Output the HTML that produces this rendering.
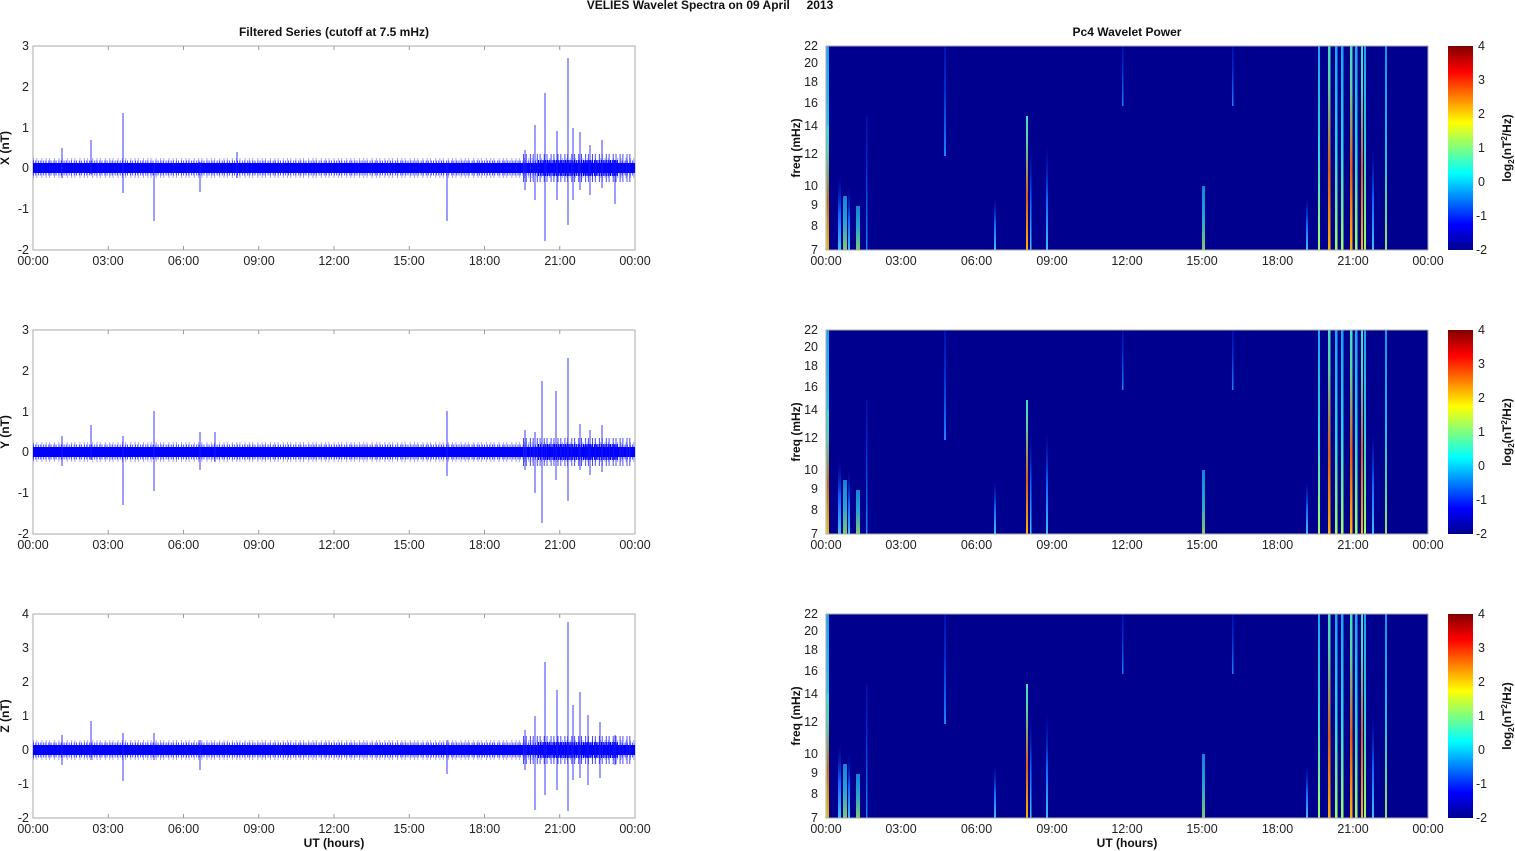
<!DOCTYPE html>
<html><head><meta charset="utf-8"><style>
html,body{margin:0;padding:0;background:#fff;}
svg{display:block;font-family:"Liberation Sans",sans-serif;}
.t{font-size:12.5px;fill:#222;}
.b{font-size:12px;font-weight:bold;fill:#111;}
</style></head><body>
<svg width="1515" height="851" viewBox="0 0 1515 851" xmlns="http://www.w3.org/2000/svg">
<defs>
<linearGradient id="jet" x1="0" y1="1" x2="0" y2="0">
<stop offset="0" stop-color="#00008f"/><stop offset="0.125" stop-color="#0000ff"/>
<stop offset="0.375" stop-color="#00ffff"/><stop offset="0.625" stop-color="#ffff00"/>
<stop offset="0.875" stop-color="#ff0000"/><stop offset="1" stop-color="#800000"/>
</linearGradient>
<linearGradient id="hot" x1="0" y1="1" x2="0" y2="0">
<stop offset="0" stop-color="#ffb000"/><stop offset="0.4" stop-color="#e06010"/><stop offset="0.8" stop-color="#60d0a0"/><stop offset="1" stop-color="#40e0c0"/>
</linearGradient>
<linearGradient id="cy" x1="0" y1="1" x2="0" y2="0">
<stop offset="0" stop-color="#a0ff60"/><stop offset="0.5" stop-color="#30d0e0"/><stop offset="1" stop-color="#20a0f0"/>
</linearGradient>
<linearGradient id="lb" x1="0" y1="1" x2="0" y2="0">
<stop offset="0" stop-color="#40c0ff"/><stop offset="0.5" stop-color="#1060ff"/><stop offset="1" stop-color="#0020c0" stop-opacity="0"/>
</linearGradient>
<linearGradient id="faint" x1="0" y1="1" x2="0" y2="0">
<stop offset="0" stop-color="#2080ff"/><stop offset="0.6" stop-color="#0030d0"/><stop offset="1" stop-color="#0010b0"/>
</linearGradient>
<g id="spec">
<rect x="0" y="0" width="602" height="204" fill="#00008f"/>
<g>
<rect x="0" y="0" width="3" height="204" fill="url(#cy)"/>
<rect x="1" y="80" width="2" height="124" fill="url(#hot)"/>
<rect x="12" y="130" width="3" height="74" fill="url(#lb)"/>
<rect x="17" y="150" width="4" height="54" fill="url(#cy)" opacity="0.8"/>
<rect x="22" y="140" width="2" height="64" fill="url(#lb)"/>
<rect x="30" y="160" width="4" height="44" fill="url(#cy)" opacity="0.8"/>
<rect x="40" y="70" width="1.5" height="134" fill="url(#faint)"/>
<rect x="118" y="0" width="2" height="110" fill="url(#faint)"/>
<rect x="168" y="150" width="2" height="54" fill="url(#lb)"/>
<rect x="200" y="70" width="2" height="134" fill="url(#hot)"/>
<rect x="204" y="100" width="1.5" height="104" fill="url(#lb)"/>
<rect x="220" y="100" width="2" height="104" fill="url(#lb)"/>
<rect x="296" y="0" width="1.5" height="60" fill="url(#faint)"/>
<rect x="376" y="140" width="3" height="64" fill="url(#cy)" opacity="0.8"/>
<rect x="406" y="0" width="1.5" height="60" fill="url(#faint)"/>
<rect x="480" y="150" width="2" height="54" fill="url(#lb)"/>
<rect x="492" y="0" width="2" height="204" fill="url(#cy)"/>
<rect x="502" y="0" width="2.5" height="204" fill="url(#hot)"/>
<rect x="509" y="0" width="2.5" height="204" fill="url(#cy)"/>
<rect x="515" y="0" width="2.5" height="204" fill="url(#cy)"/>
<rect x="524" y="0" width="2.5" height="204" fill="url(#hot)"/>
<rect x="529" y="0" width="2.5" height="204" fill="url(#cy)"/>
<rect x="535" y="0" width="2" height="204" fill="url(#hot)"/>
<rect x="538" y="0" width="2" height="204" fill="url(#cy)"/>
<rect x="546" y="100" width="2" height="104" fill="url(#lb)"/>
<rect x="559" y="0" width="2" height="204" fill="url(#cy)" opacity="0.9"/>
</g>
</g>
<g id="faxis" class="t" text-anchor="end">
<text x="-4" y="4">7</text><text x="-4" y="-20">8</text><text x="-4" y="-41">9</text><text x="-4" y="-60">10</text><text x="-4" y="-92">12</text><text x="-4" y="-120">14</text><text x="-4" y="-143">16</text><text x="-4" y="-164">18</text><text x="-4" y="-183">20</text><text x="-4" y="-200">22</text>
</g>
<g id="cbar">
<rect x="0" y="0" width="25" height="204" fill="url(#jet)"/>
<g class="t"><text x="30" y="4">4</text><text x="30" y="38">3</text><text x="30" y="72">2</text><text x="30" y="106">1</text><text x="30" y="140">0</text><text x="28" y="174">-1</text><text x="28" y="208">-2</text></g>
</g>
<g id="ltime" class="t" text-anchor="middle">
<text x="33" y="265">00:00</text><text x="108" y="265">03:00</text><text x="183.5" y="265">06:00</text><text x="259" y="265">09:00</text><text x="334" y="265">12:00</text><text x="409" y="265">15:00</text><text x="484.5" y="265">18:00</text><text x="560" y="265">21:00</text><text x="635" y="265">00:00</text>
</g>
<g id="ticks" stroke="#999" stroke-width="1">
<path d="M75.25 0v4M150.5 0v4M225.75 0v4M301 0v4M376.25 0v4M451.5 0v4M526.75 0v4M75.25 204v-4M150.5 204v-4M225.75 204v-4M301 204v-4M376.25 204v-4M451.5 204v-4M526.75 204v-4"/>
</g>
<g id="band">
<path d="M0 0H602" stroke="#7070ff" stroke-width="20" stroke-dasharray="1 2.3 1 4.1 1 3.3" opacity="0.6"/>
<path d="M0 0H602" stroke="#3030ff" stroke-width="15" stroke-dasharray="1 1.2 1 1.9" opacity="0.85"/>
<path d="M0 0H602" stroke="#0000ff" stroke-width="10"/>
<path d="M490 0H600" stroke="#2020ff" stroke-width="28" stroke-dasharray="1 1.8 1 3.1" opacity="0.8"/>
<path d="M505 0H585" stroke="#0000ff" stroke-width="16" stroke-dasharray="1 0.8"/>
</g>
</defs>

<text x="710" y="9" class="b" text-anchor="middle">VELIES Wavelet Spectra on 09 April &#160;&#160;&#160;&#160;2013</text>
<text x="334" y="36" class="b" text-anchor="middle">Filtered Series (cutoff at 7.5 mHz)</text>
<text x="1127" y="36" class="b" text-anchor="middle">Pc4 Wavelet Power</text>

<g>
<rect x="33" y="46" width="602" height="204" fill="#fff" stroke="#aaa"/>
<use href="#ticks" x="33" y="46"/>
<use href="#band" x="33" y="168"/>
<g stroke="#1a1aff" stroke-width="1" opacity="0.85">
<path d="M62 148V178M91 140V174M123 113V193M154 164V221M200 162V192M237 152V178M447 164V221M535 125V200M545 93V241M557 131V200M568 58V225M573 128V200M580 132V190M602 140V188M615 160V204M525 150V190M590 145V195"/>
</g>
<g class="t" text-anchor="end"><text x="29" y="50">3</text><text x="29" y="91">2</text><text x="29" y="132">1</text><text x="29" y="172">0</text><text x="29" y="213">-1</text><text x="29" y="254">-2</text></g>
<text transform="translate(9,148) rotate(-90)" class="b" text-anchor="middle">X (nT)</text>
<use href="#ltime"/>
</g>

<g>
<rect x="33" y="330" width="602" height="204" fill="#fff" stroke="#aaa"/>
<use href="#ticks" x="33" y="330"/>
<use href="#band" x="33" y="452"/>
<g stroke="#1a1aff" stroke-width="1" opacity="0.85">
<path d="M62 436V466M91 425V460M123 436V505M154 411V491M200 432V470M215 432V462M447 411V476M535 432V493M542 381V523M556 391V480M568 358V501M580 424V470M602 425V472M525 430V470M590 430V475"/>
</g>
<g class="t" text-anchor="end"><text x="29" y="334">3</text><text x="29" y="375">2</text><text x="29" y="416">1</text><text x="29" y="456">0</text><text x="29" y="497">-1</text><text x="29" y="538">-2</text></g>
<text transform="translate(9,432) rotate(-90)" class="b" text-anchor="middle">Y (nT)</text>
<use href="#ltime" y="284"/>
</g>

<g>
<rect x="33" y="614" width="602" height="204" fill="#fff" stroke="#aaa"/>
<use href="#ticks" x="33" y="614"/>
<use href="#band" x="33" y="750"/>
<g stroke="#1a1aff" stroke-width="1" opacity="0.85">
<path d="M62 735V765M91 721V760M123 733V781M154 733V760M200 740V770M447 740V774M535 716V810M545 662V795M557 690V790M568 622V811M573 705V780M580 692V778M600 722V778M615 735V765M525 730V770M588 715V785"/>
</g>
<g class="t" text-anchor="end"><text x="29" y="618">4</text><text x="29" y="652">3</text><text x="29" y="686">2</text><text x="29" y="720">1</text><text x="29" y="754">0</text><text x="29" y="788">-1</text><text x="29" y="822">-2</text></g>
<text transform="translate(9,716) rotate(-90)" class="b" text-anchor="middle">Z (nT)</text>
<use href="#ltime" y="568"/>
<text x="334" y="847" class="b" text-anchor="middle">UT (hours)</text>
</g>

<g>
<use href="#spec" x="826" y="46"/>
<rect x="826" y="46" width="602" height="204" fill="none" stroke="#aaa"/>
<use href="#faxis" x="822" y="250"/>
<text transform="translate(800,148) rotate(-90)" class="b" text-anchor="middle">freq (mHz)</text>
<use href="#ltime" x="793"/>
<use href="#cbar" x="1448" y="46"/>
<text transform="translate(1511,148) rotate(-90)" class="b" text-anchor="middle">log<tspan font-size="8" dy="3">2</tspan><tspan dy="-3">(nT</tspan><tspan font-size="8" dy="-4">2</tspan><tspan dy="4">/Hz)</tspan></text>
</g>
<g>
<use href="#spec" x="826" y="330"/>
<rect x="826" y="330" width="602" height="204" fill="none" stroke="#aaa"/>
<use href="#faxis" x="822" y="534"/>
<text transform="translate(800,432) rotate(-90)" class="b" text-anchor="middle">freq (mHz)</text>
<use href="#ltime" x="793" y="284"/>
<use href="#cbar" x="1448" y="330"/>
<text transform="translate(1511,432) rotate(-90)" class="b" text-anchor="middle">log<tspan font-size="8" dy="3">2</tspan><tspan dy="-3">(nT</tspan><tspan font-size="8" dy="-4">2</tspan><tspan dy="4">/Hz)</tspan></text>
</g>
<g>
<use href="#spec" x="826" y="614"/>
<rect x="826" y="614" width="602" height="204" fill="none" stroke="#aaa"/>
<use href="#faxis" x="822" y="818"/>
<text transform="translate(800,716) rotate(-90)" class="b" text-anchor="middle">freq (mHz)</text>
<use href="#ltime" x="793" y="568"/>
<use href="#cbar" x="1448" y="614"/>
<text transform="translate(1511,716) rotate(-90)" class="b" text-anchor="middle">log<tspan font-size="8" dy="3">2</tspan><tspan dy="-3">(nT</tspan><tspan font-size="8" dy="-4">2</tspan><tspan dy="4">/Hz)</tspan></text>
<text x="1127" y="847" class="b" text-anchor="middle">UT (hours)</text>
</g>
</svg>
</body></html>
